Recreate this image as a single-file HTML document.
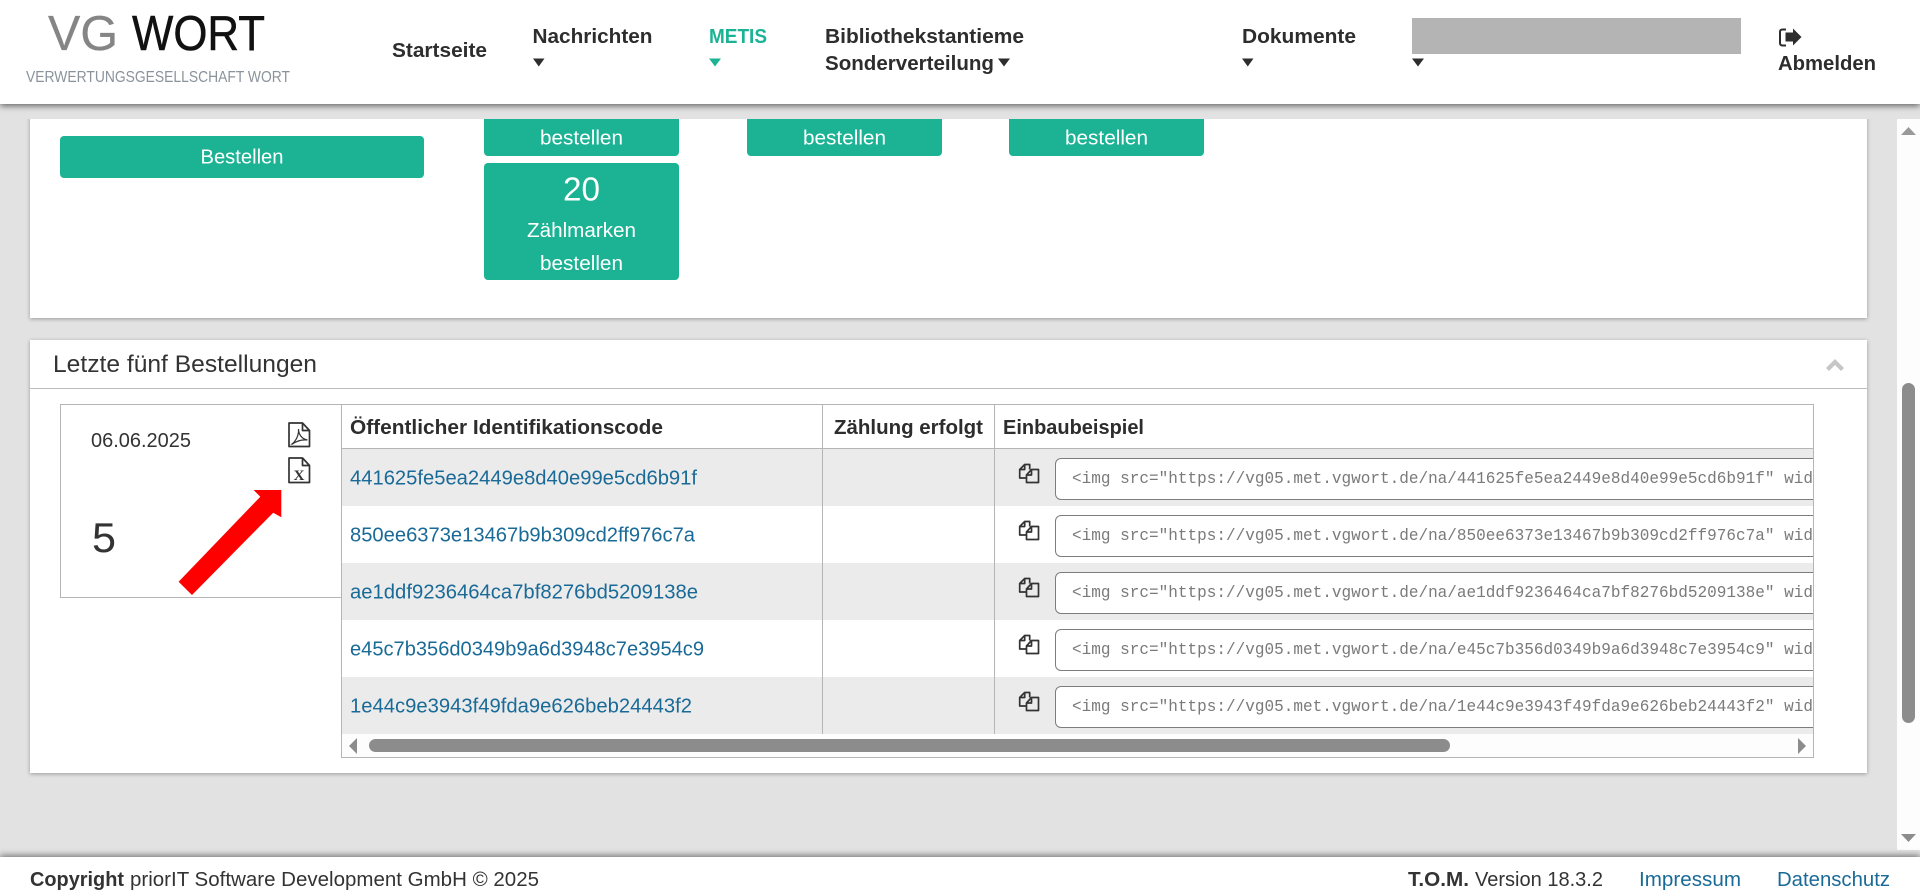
<!DOCTYPE html>
<html lang="de"><head><meta charset="utf-8"><title>VG WORT – Letzte fünf Bestellungen</title>
<style>
html,body{margin:0;padding:0;width:1920px;height:895px;overflow:hidden;background:#e2e2e2;font-family:"Liberation Sans",sans-serif}
.a{position:absolute}
#header{left:0;top:0;width:1920px;height:104px;background:#fff;box-shadow:0 2px 6px rgba(0,0,0,.55);z-index:3}
#redact{left:1412px;top:18px;width:329px;height:36px;background:#b4b4b4}
#scrollarea{left:0;top:119px;width:1897px;height:738px;overflow:hidden}
.card{background:#fff;box-shadow:0 1px 4px rgba(0,0,0,.32)}
#c1{left:30px;top:-20px;width:1837px;height:219px}
#c2{left:30px;top:221px;width:1837px;height:433px}
#c2line{left:30px;top:269px;width:1837px;height:1px;background:#bdbdbd}
.btn{background:#1cb394;border-radius:4px}
#vs{left:1897px;top:119px;width:23px;height:731px;background:#fdfdfd}
#vt{left:1902px;top:383px;width:13px;height:340px;background:#8c8c8c;border-radius:7px}
#footer{left:0;top:857px;width:1920px;height:38px;background:#fff;box-shadow:0 -2px 6px rgba(0,0,0,.45);z-index:3}
#lbox{left:60px;top:404px;width:280px;height:192px;border:1px solid #b5b5b5;background:#fff}
#tbl{left:341px;top:404px;width:1471px;height:352px;border:1px solid #b5b5b5;background:#fdfdfd;overflow:hidden}
.row{position:absolute;left:0;width:1472px;height:57px}
.g{background:#ebebeb}.w{background:#fff}
.inp{position:absolute;left:713px;width:900px;height:40px;background:#fff;border:1px solid #7d7d7d;border-radius:6px}
.vl{position:absolute;top:0;width:1px;height:329px;background:#b5b5b5}
#hl{position:absolute;left:0;top:43px;width:1472px;height:1px;background:#b5b5b5}
#ht{position:absolute;left:27px;top:334px;width:1081px;height:13px;background:#8c8c8c;border-radius:7px}
svg{position:absolute;left:0;top:0;z-index:4}
text{font-family:"Liberation Sans",sans-serif;fill:#333}
.h{font-weight:700;font-size:20px;fill:#2d2d2d}
.w1{fill:#fff;font-size:20px}
.l{font-size:20px;fill:#1a6a97}
.m{font-family:"Liberation Mono",monospace;font-size:17px;fill:#7a7a7a}
.f{font-size:20px}
.ic{fill:none;stroke:#333;stroke-width:1.7;stroke-linejoin:round}
</style></head><body>
<div class="a" id="scrollarea">
  <div class="a card" id="c1"></div>
  <div class="a card" id="c2"></div>
  <div class="a" id="c2line"></div>
  <div class="a btn" style="left:60px;top:17px;width:364px;height:42px"></div>
  <div class="a btn" style="left:484px;top:-20px;width:195px;height:57px"></div>
  <div class="a btn" style="left:484px;top:44px;width:195px;height:117px"></div>
  <div class="a btn" style="left:747px;top:-20px;width:195px;height:57px"></div>
  <div class="a btn" style="left:1009px;top:-20px;width:195px;height:57px"></div>
</div>
<div class="a" id="lbox"></div>
<div class="a" id="tbl">
  <div class="row w" style="top:0;height:43px"></div>
  <div class="row g" style="top:44px"></div>
  <div class="row w" style="top:101px"></div>
  <div class="row g" style="top:158px"></div>
  <div class="row w" style="top:215px"></div>
  <div class="row g" style="top:272px"></div>
  <div class="inp" style="top:53px"></div>
  <div class="inp" style="top:110px"></div>
  <div class="inp" style="top:167px"></div>
  <div class="inp" style="top:224px"></div>
  <div class="inp" style="top:281px"></div>
  <div id="hl"></div>
  <div class="vl" style="left:480px"></div>
  <div class="vl" style="left:652px"></div>
  <div id="ht"></div>
</div>
<div class="a" id="vs"></div><div class="a" id="vt"></div>
<div class="a" id="header"><div class="a" id="redact"></div></div>
<div class="a" id="footer"></div>

<svg width="1920" height="895" viewBox="0 0 1920 895" xmlns="http://www.w3.org/2000/svg">
  <!-- logo -->
  <text x="48" y="50" font-size="49" style="fill:#858585;stroke:#858585;stroke-width:.3" textLength="70" lengthAdjust="spacingAndGlyphs">VG</text>
  <text x="132" y="50" font-size="49" style="fill:#111;stroke:#111;stroke-width:.5" textLength="133" lengthAdjust="spacingAndGlyphs">WORT</text>
  <text x="26" y="82" font-size="15.500" style="fill:#8a929b" textLength="264" lengthAdjust="spacingAndGlyphs">VERWERTUNGSGESELLSCHAFT WORT</text>

  <!-- nav -->
  <text class="h" x="392" y="57" textLength="95" lengthAdjust="spacingAndGlyphs">Startseite</text>
  <text class="h" x="532.500" y="43" textLength="120" lengthAdjust="spacingAndGlyphs">Nachrichten</text>
  <text class="h" x="709" y="43" textLength="58" lengthAdjust="spacingAndGlyphs" style="fill:#1cb394">METIS</text>
  <text class="h" x="825" y="43" textLength="199" lengthAdjust="spacingAndGlyphs">Bibliothekstantieme</text>
  <text class="h" x="825" y="70" textLength="169" lengthAdjust="spacingAndGlyphs">Sonderverteilung</text>
  <text class="h" x="1242" y="43" textLength="114" lengthAdjust="spacingAndGlyphs">Dokumente</text>
  <text class="h" x="1778" y="70" textLength="98" lengthAdjust="spacingAndGlyphs">Abmelden</text>
  <g fill="#2d2d2d">
    <path d="M533 58.500h11.500l-5.750 8z"/>
    <path d="M998 58.500h12l-6 8z"/>
    <path d="M1242 58.500h11.500l-5.750 8z"/>
    <path d="M1412 58.500h12l-6 8z"/>
    <path d="M709 58.500h12l-6 8z" fill="#1cb394"/>
    <!-- logout -->
    <path d="M1786 29.500h-3.500q-2.500 0-2.500 2.500v11q0 2.500 2.500 2.500h3.500" fill="none" stroke="#2d2d2d" stroke-width="2"/>
    <path d="M1785.500 32.500h7.500v-4l8.500 8.500-8.500 8.500v-4h-7.500z"/>
  </g>

  <!-- buttons -->
  <text class="w1" x="200.500" y="163.500" textLength="83" lengthAdjust="spacingAndGlyphs">Bestellen</text>
  <text class="w1" x="540" y="144.500" textLength="83" lengthAdjust="spacingAndGlyphs">bestellen</text>
  <text class="w1" x="803" y="144.500" textLength="83" lengthAdjust="spacingAndGlyphs">bestellen</text>
  <text class="w1" x="1065" y="144.500" textLength="83" lengthAdjust="spacingAndGlyphs">bestellen</text>
  <text class="w1" x="563" y="200.500" style="font-size:33px" textLength="37" lengthAdjust="spacingAndGlyphs">20</text>
  <text class="w1" x="527" y="237" textLength="109" lengthAdjust="spacingAndGlyphs">Zählmarken</text>
  <text class="w1" x="540" y="270" textLength="83" lengthAdjust="spacingAndGlyphs">bestellen</text>

  <!-- card header -->
  <text x="53" y="372" font-size="24" textLength="264" lengthAdjust="spacingAndGlyphs">Letzte fünf Bestellungen</text>
  <path d="M1835 359L1844 368L1841 371L1835 365L1829 371L1826 368Z" fill="#c6c6c6"/>

  <!-- left box -->
  <text x="91" y="447" font-size="20" textLength="100" lengthAdjust="spacingAndGlyphs">06.06.2025</text>
  <text x="92" y="552" font-size="42" textLength="24" lengthAdjust="spacingAndGlyphs">5</text>
  <path class="ic" d="M289 423h13.500l7 7.500v16h-20.500z"/>
  <path class="ic" d="M302.500 423v7.500h7"/>
  <path d="M292 444c4-3 7-9 6.500-15 0 5 3 10 9 11-5-.5-10 .5-15 4z" fill="none" stroke="#333" stroke-width="1.200"/>
  <path class="ic" d="M289 458h13.500l7 7.500v17h-20.500z"/>
  <path class="ic" d="M302.500 458v7.500h7"/>
  <text x="299" y="480" font-size="15" text-anchor="middle" font-weight="700" style="font-family:'Liberation Serif',serif;fill:#333">X</text>
  <path d="M253.600 490L281.300 490L281.300 517.300L273.200 512.700L192 595L178.600 581.700L260.300 496.700Z" fill="#f00"/>

  <!-- table header -->
  <text class="h" x="350" y="434" textLength="313" lengthAdjust="spacingAndGlyphs">Öffentlicher Identifikationscode</text>
  <text class="h" x="834" y="434" textLength="149" lengthAdjust="spacingAndGlyphs">Zählung erfolgt</text>
  <text class="h" x="1003" y="434" textLength="141" lengthAdjust="spacingAndGlyphs">Einbaubeispiel</text>

  <!-- links -->
  <text class="l" x="350" y="484.500" textLength="347" lengthAdjust="spacingAndGlyphs">441625fe5ea2449e8d40e99e5cd6b91f</text>
  <text class="l" x="350" y="541.500" textLength="345" lengthAdjust="spacingAndGlyphs">850ee6373e13467b9b309cd2ff976c7a</text>
  <text class="l" x="350" y="598.500" textLength="348" lengthAdjust="spacingAndGlyphs">ae1ddf9236464ca7bf8276bd5209138e</text>
  <text class="l" x="350" y="655.500" textLength="354" lengthAdjust="spacingAndGlyphs">e45c7b356d0349b9a6d3948c7e3954c9</text>
  <text class="l" x="350" y="712.500" textLength="342" lengthAdjust="spacingAndGlyphs">1e44c9e3943f49fda9e626beb24443f2</text>

  <!-- code -->
  <svg x="0" y="0" width="1813" height="895">
    <text class="m" x="1072" y="483" textLength="741" lengthAdjust="spacingAndGlyphs">&lt;img src="https://vg05.met.vgwort.de/na/441625fe5ea2449e8d40e99e5cd6b91f" wid</text>
    <text class="m" x="1072" y="540" textLength="741" lengthAdjust="spacingAndGlyphs">&lt;img src="https://vg05.met.vgwort.de/na/850ee6373e13467b9b309cd2ff976c7a" wid</text>
    <text class="m" x="1072" y="597" textLength="741" lengthAdjust="spacingAndGlyphs">&lt;img src="https://vg05.met.vgwort.de/na/ae1ddf9236464ca7bf8276bd5209138e" wid</text>
    <text class="m" x="1072" y="654" textLength="741" lengthAdjust="spacingAndGlyphs">&lt;img src="https://vg05.met.vgwort.de/na/e45c7b356d0349b9a6d3948c7e3954c9" wid</text>
    <text class="m" x="1072" y="711" textLength="741" lengthAdjust="spacingAndGlyphs">&lt;img src="https://vg05.met.vgwort.de/na/1e44c9e3943f49fda9e626beb24443f2" wid</text>
  </svg>

  <!-- copy icons -->
  <g><path class="ic" d="M1026 478h-6.300v-8.500l5-5h5v5M1024.700 464.500v5h-5"/><path class="ic" d="M1031.500 469.500h7v13h-12v-7.500z"/><path class="ic" d="M1031.500 469.500v5.500h-5"/></g>
  <g transform="translate(0,57)"><path class="ic" d="M1026 478h-6.300v-8.500l5-5h5v5M1024.700 464.500v5h-5"/><path class="ic" d="M1031.500 469.500h7v13h-12v-7.500z"/><path class="ic" d="M1031.500 469.500v5.500h-5"/></g>
  <g transform="translate(0,114)"><path class="ic" d="M1026 478h-6.300v-8.500l5-5h5v5M1024.700 464.500v5h-5"/><path class="ic" d="M1031.500 469.500h7v13h-12v-7.500z"/><path class="ic" d="M1031.500 469.500v5.500h-5"/></g>
  <g transform="translate(0,171)"><path class="ic" d="M1026 478h-6.300v-8.500l5-5h5v5M1024.700 464.500v5h-5"/><path class="ic" d="M1031.500 469.500h7v13h-12v-7.500z"/><path class="ic" d="M1031.500 469.500v5.500h-5"/></g>
  <g transform="translate(0,228)"><path class="ic" d="M1026 478h-6.300v-8.500l5-5h5v5M1024.700 464.500v5h-5"/><path class="ic" d="M1031.500 469.500h7v13h-12v-7.500z"/><path class="ic" d="M1031.500 469.500v5.500h-5"/></g>

  <!-- scrollbar arrows -->
  <g fill="#8c8c8c">
    <path d="M357 738v16l-8-8z"/>
    <path d="M1798 738v16l8-8z"/>
    <path d="M1901 135h15l-7.500-8z" fill="#999"/>
    <path d="M1901 834h15l-7.500 8z"/>
  </g>

  <!-- footer -->
  <text class="f" x="30" y="886" font-weight="700" textLength="94" lengthAdjust="spacingAndGlyphs">Copyright</text>
  <text class="f" x="130" y="886" textLength="409" lengthAdjust="spacingAndGlyphs">priorIT Software Development GmbH © 2025</text>
  <text class="f" x="1408" y="886" font-weight="700" textLength="61" lengthAdjust="spacingAndGlyphs">T.O.M.</text>
  <text class="f" x="1475" y="886" textLength="128" lengthAdjust="spacingAndGlyphs">Version 18.3.2</text>
  <text class="l" x="1639" y="886" textLength="102" lengthAdjust="spacingAndGlyphs">Impressum</text>
  <text class="l" x="1777" y="886" textLength="113" lengthAdjust="spacingAndGlyphs">Datenschutz</text>
</svg>
</body></html>
